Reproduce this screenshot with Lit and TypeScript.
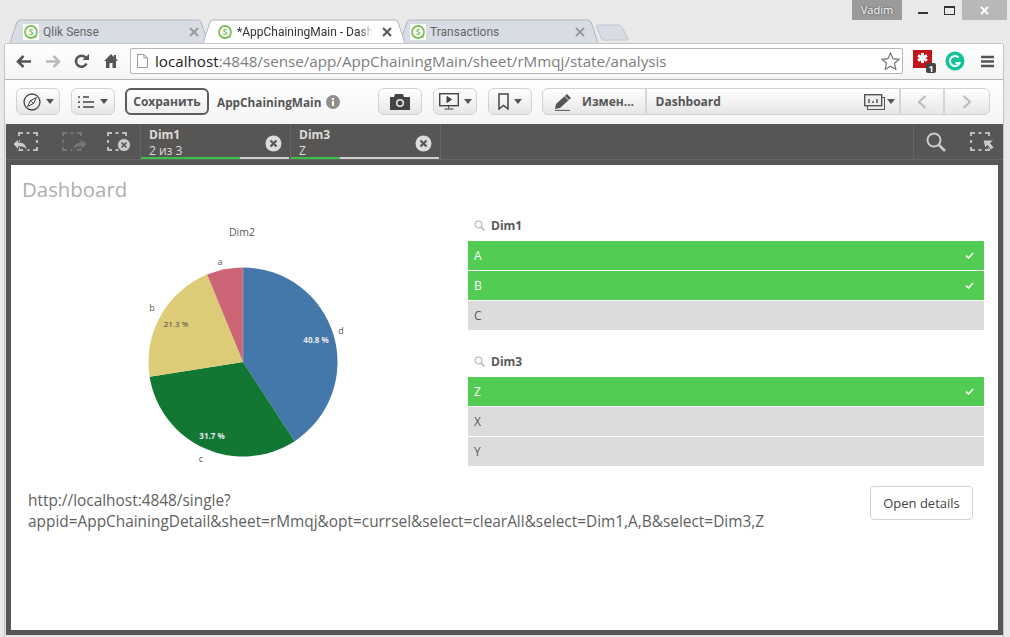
import { LitElement, html, css, svg } from 'lit';
import { customElement } from 'lit/decorators.js';

const slices = [
  { name: 'd', pct: 40.8, color: '#4477aa' },
  { name: 'c', pct: 31.7, color: '#117733' },
  { name: 'b', pct: 21.3, color: '#ddcc77' },
  { name: 'a', pct: 6.2, color: '#cc6677' },
];

const CX = 243;
const CY = 362;
const R = 94.5;

function point(deg: number, r = R) {
  const a = (deg * Math.PI) / 180;
  return [CX + r * Math.sin(a), CY - r * Math.cos(a)];
}

function piePaths() {
  let start = 0;
  return slices.map((s) => {
    const end = start + s.pct * 3.6;
    const [x1, y1] = point(start);
    const [x2, y2] = point(end);
    const large = end - start > 180 ? 1 : 0;
    start = end;
    return svg`<path d="M${CX} ${CY}L${x1} ${y1}A${R} ${R} 0 ${large} 1 ${x2} ${y2}Z" fill=${s.color}></path>`;
  });
}

const caret = html`<svg class="caret" width="8" height="5" viewBox="0 0 8 5"><path d="M0 0h8L4 5z" fill="#555"></path></svg>`;

const favicon = html`<svg class="fav" width="16" height="16" viewBox="0 0 16 16">
  <rect width="16" height="16" fill="#fff"></rect>
  <circle cx="8" cy="8" r="6" fill="none" stroke="#7cc05a" stroke-width="1.8"></circle>
  <path d="M11 12.5l2.5 2v-3.5z" fill="#7cc05a"></path>
  <text x="8" y="11" text-anchor="middle" font-size="8.5" font-weight="700" fill="#7cc05a" font-family="Open Sans, sans-serif">S</text>
</svg>`;

const tabClose = (color: string) => html`<svg class="tab-x" width="10" height="10" viewBox="0 0 10 10"><path d="M1 1l8 8M9 1l-8 8" stroke=${color} stroke-width="2"></path></svg>`;

const clearCircle = html`<svg class="clear" width="17" height="17" viewBox="0 0 17 17">
  <circle cx="8.5" cy="8.5" r="8" fill="#dcdcdc"></circle>
  <path d="M5.5 5.5l6 6M11.5 5.5l-6 6" stroke="#575654" stroke-width="2.2"></path>
</svg>`;

// dashed selection box, x is its left edge inside the 25x19 icon
const dashedBox = (x: number, color: string) =>
  svg`<path transform="translate(${x} 0)" d="M1 4V1h4M15 1h4v3M19 15v3h-4M5 18H1v-3M8.500 1h3M8.500 18h3M1 8v3M19 8v3" fill="none" stroke=${color} stroke-width="2"></path>`;

@customElement('app-root')
export class AppRoot extends LitElement {
  static styles = css`
    :host {
      display: block;
      width: 1010px;
      height: 637px;
      overflow: hidden;
      background: #e9e9e9;
      font-family: 'Open Sans', sans-serif;
      color: #595959;
    }

    /* window title area */
    .strip {
      display: flex;
      justify-content: space-between;
      height: 43px;
    }
    .tabs {
      display: flex;
      padding: 19px 0 0 10px;
    }
    .tab {
      position: relative;
      display: flex;
      align-items: center;
      width: 198px;
      height: 24px;
      margin-right: -5px;
      padding: 2px 9px 0 13px;
      box-sizing: border-box;
      font-family: Roboto, sans-serif;
      font-size: 12px;
      color: #666;
    }
    .tab.active {
      z-index: 2;
      width: 202px;
      color: #333;
      padding: 2px 13px 0 14px;
    }
    .tab:nth-child(3) {
      padding: 2px 13px 0 10px;
    }
    .tab-shape {
      position: absolute;
      inset: 0;
      width: 100%;
      height: 100%;
    }
    .fav,
    .tab-title,
    .tab-x {
      position: relative;
      flex: none;
    }
    .tab-title {
      flex: 1;
      margin-left: 4px;
      overflow: hidden;
      white-space: nowrap;
    }
    .tab.active .tab-title {
      margin-right: 9px;
      -webkit-mask-image: linear-gradient(90deg, #000 90%, transparent);
      mask-image: linear-gradient(90deg, #000 90%, transparent);
    }
    .new-tab {
      margin: 5px 0 0 3px;
    }
    .win {
      display: flex;
      align-items: flex-start;
      padding-right: 3px;
    }
    .vadim {
      width: 50px;
      height: 20px;
      margin-right: 8px;
      background: #9b9b9b;
      color: #fff;
      font-size: 11px;
      line-height: 20px;
      text-align: center;
      text-shadow: 0 0 2px #333;
    }
    .win-btn {
      display: flex;
      align-items: center;
      justify-content: center;
      width: 26px;
      height: 20px;
    }
    .win-close {
      width: 45px;
      background: #b8b8b8;
    }

    /* browser frame */
    .browser {
      height: 594px;
      margin: 0 6px 0 4px;
      padding: 0 0 2px 1px;
      box-sizing: border-box;
      border: 1px solid #c4c4c4;
      border-bottom-width: 0;
      border-radius: 3px 3px 0 0;
      background: #e2e2e2;
      display: flex;
      flex-direction: column;
    }
    .nav {
      display: flex;
      align-items: center;
      height: 36px;
      flex: none;
      margin-left: -1px;
      padding: 0 10px 1px 4px;
      border-bottom: 1px solid #b4b4b4;
      background: linear-gradient(#fff, #f4f4f4);
      box-sizing: border-box;
    }
    .nav-icon {
      display: flex;
      justify-content: center;
      width: 29px;
      flex: none;
    }
    .address {
      display: flex;
      align-items: center;
      width: 773px;
      height: 26px;
      margin-left: 5px;
      padding-left: 6px;
      box-sizing: border-box;
      flex: none;
      border: 1px solid #b5b5b5;
      border-radius: 2px;
      background: #fff;
      font-size: 15.2px;
      color: #7d7d7d;
      white-space: nowrap;
    }
    .address b {
      font-weight: 400;
      color: #222;
    }
    .address .url {
      flex: 1;
      margin-left: 7px;
    }
    .address .star {
      margin-right: 2px;
    }
    .ext {
      display: flex;
      align-items: center;
      margin-left: 10px;
      gap: 9px;
    }
    .menu-icon {
      margin-left: 6px;
    }

    /* qlik toolbar */
    .toolbar {
      display: flex;
      align-items: center;
      flex: none;
      height: 44px;
      margin-left: -1px;
      padding: 0 0 1px 11px;
      background: linear-gradient(#fff, #f5f5f5);
      box-sizing: border-box;
    }
    .btn {
      display: flex;
      align-items: center;
      justify-content: center;
      gap: 5px;
      width: 44px;
      height: 27px;
      box-sizing: border-box;
      flex: none;
      border: 1px solid #d2d2d2;
      border-radius: 6px;
      background: linear-gradient(#fff, #e6e6e6);
    }
    .save {
      width: 84px;
      margin: 0 8px 0 10px;
      border: 2px solid #5c5c5c;
      background: linear-gradient(#fff, #efefef);
      font-size: 12px;
      font-weight: 700;
      color: #555;
    }
    .app-name {
      font-size: 11.8px;
      font-weight: 700;
      color: #555;
      width: 109px;
      flex: none;
      white-space: nowrap;
    }
    .info {
      flex: none;
    }
    .ml-11 {
      margin-left: 11px;
    }
    .ml-38 {
      margin-left: 38px;
    }
    .group {
      display: flex;
      width: 448px;
      height: 27px;
      margin-left: 10px;
      box-sizing: border-box;
      flex: none;
      border: 1px solid #d2d2d2;
      border-radius: 6px;
      background: linear-gradient(#fff, #e6e6e6);
      font-size: 12px;
      font-weight: 700;
      color: #555;
    }
    .group > div {
      display: flex;
      align-items: center;
      box-sizing: border-box;
      border-right: 2px solid #d6d6d6;
    }
    .group > div:last-child {
      border-right: 0;
    }
    .g-edit {
      width: 104px;
      padding-left: 11px;
      gap: 10px;
    }
    .g-sheet {
      width: 256px;
      padding: 0 4px 0 9px;
      justify-content: space-between;
    }
    .g-sheet span {
      display: flex;
      align-items: center;
      gap: 2px;
    }
    .g-nav {
      width: 44px;
      justify-content: center;
    }

    /* dark frame */
    .frame {
      display: flex;
      flex-direction: column;
      flex: 1;
      min-height: 0;
      width: 997px;
      background: #575654;
      box-sizing: border-box;
      padding-bottom: 5px;
    }
    .selbar {
      display: flex;
      flex: none;
      height: 36px;
      margin-bottom: 5px;
      box-sizing: border-box;
      border-bottom: 1px solid #666;
      color: #dcdcdc;
    }
    .sel-tools {
      display: flex;
      align-items: center;
      width: 135px;
      padding-left: 7px;
      box-sizing: border-box;
      flex: none;
      border-right: 1px solid #666;
    }
    .t2 {
      margin-left: 24px;
    }
    .t3 {
      margin-left: 20px;
    }
    .sel-item {
      position: relative;
      width: 150px;
      flex: none;
      box-sizing: border-box;
      padding: 3px 0 0 8px;
      border-right: 1px solid #666;
      font-size: 12px;
      line-height: 16px;
    }
    .sel-item b {
      display: block;
      font-weight: 700;
    }
    .sel-item .clear {
      position: absolute;
      right: 8px;
      top: 11px;
    }
    .sel-track {
      position: absolute;
      left: 0;
      right: 1px;
      bottom: 0;
      height: 2px;
      background: #d0d0d0;
    }
    .sel-fill {
      height: 100%;
      background: #39c24a;
    }
    .sel-right {
      display: flex;
      align-items: center;
      margin-left: auto;
      width: 90px;
      padding-left: 12px;
      gap: 24px;
      box-sizing: border-box;
      border-left: 1px solid #666;
    }

    /* sheet */
    .sheet {
      flex: 1;
      min-height: 0;
      margin: 0 5px;
      background: #fff;
    }
    .sheet h1 {
      height: 51px;
      margin: 0;
      padding: 11px 0 0 11px;
      box-sizing: border-box;
      font-size: 20.4px;
      font-weight: 400;
      line-height: 27px;
      color: #b0aeac;
    }
    .cols {
      display: grid;
      grid-template-columns: 457px 516px;
      height: 270px;
    }
    .cols svg text {
      font-family: 'Open Sans', sans-serif;
    }
    .filter + .filter {
      margin-top: 22px;
    }
    .filter-head {
      display: flex;
      align-items: center;
      gap: 6px;
      height: 25px;
      padding: 0 0 7px 6px;
      box-sizing: border-box;
      font-size: 12px;
      font-weight: 700;
      color: #595959;
    }
    .row {
      display: flex;
      align-items: center;
      justify-content: space-between;
      height: 29px;
      padding: 0 10px 0 6px;
      box-sizing: border-box;
      margin-bottom: 1px;
      background: #dcdcdc;
      font-size: 12px;
      color: #595959;
    }
    .row.sel {
      background: #52cc52;
      color: #fff;
    }
    .row:last-child {
      margin-bottom: 0;
    }
    .footer {
      display: flex;
      justify-content: space-between;
      align-items: flex-start;
      padding: 0 25px 0 17px;
    }
    .link {
      padding-top: 4px;
      font-size: 15.4px;
      line-height: 21px;
      color: #5f5f5f;
    }
    .open {
      width: 103px;
      height: 34px;
      box-sizing: border-box;
      flex: none;
      border: 1px solid #d2d2d2;
      border-radius: 4px;
      background: #fff;
      font-family: inherit;
      font-size: 13px;
      color: #444;
      padding: 0;
    }
  `;

  private renderTab(title: string, active: boolean) {
    const fill = active ? '#fff' : '#d8dde5';
    const w = active ? 202 : 198;
    return html`<div class="tab ${active ? 'active' : ''}">
      <svg class="tab-shape" viewBox="0 0 ${w} 24" preserveAspectRatio="none">
        <path d="M0 24L7 3Q8 1 11 1H${w - 11}Q${w - 8} 1 ${w - 7} 3L${w} 24" fill=${fill} stroke="#b2b5ba"></path>
      </svg>
      ${favicon}
      <span class="tab-title">${title}</span>
      ${tabClose(active ? '#555' : '#9a9a9a')}
    </div>`;
  }

  private renderRow(label: string, sel: boolean) {
    return html`<div class="row ${sel ? 'sel' : ''}">
      <span>${label}</span>
      ${sel
        ? html`<svg width="9" height="7" viewBox="0 0 9 7"><path d="M1 3.5l2.5 2.5L8 1" fill="none" stroke="#fff" stroke-width="1.6"></path></svg>`
        : ''}
    </div>`;
  }

  private renderFilter(name: string, rows: [string, boolean][]) {
    return html`<div class="filter">
      <div class="filter-head">
        <svg width="11" height="11" viewBox="0 0 11 11"><circle cx="4.5" cy="4.5" r="3.5" fill="none" stroke="#aaa"></circle><path d="M7 7l3.5 3.5" stroke="#aaa" stroke-width="1.2"></path></svg>
        ${name}
      </div>
      ${rows.map(([label, sel]) => this.renderRow(label, sel))}
    </div>`;
  }

  private renderSelection(name: string, value: string, fill: number) {
    return html`<div class="sel-item">
      <b>${name}</b>${value}
      ${clearCircle}
      <div class="sel-track"><div class="sel-fill" style="width:${fill}%"></div></div>
    </div>`;
  }

  render() {
    return html`
      <div class="strip">
        <div class="tabs">
          ${this.renderTab('Qlik Sense', false)}
          ${this.renderTab('*AppChainingMain - Dash', true)}
          ${this.renderTab('Transactions', false)}
          <svg class="new-tab" width="33" height="17" viewBox="0 0 33 17"><path d="M1 1H23Q25 1 26 3L32 15Q32 16 30 16H8Q6 16 5 14L1 3Q0 1 1 1Z" fill="#d8dde5" stroke="#c2c5ca"></path></svg>
        </div>
        <div class="win">
          <div class="vadim">Vadim</div>
          <div class="win-btn"><svg width="10" height="10" viewBox="0 0 10 10"><rect y="7" width="10" height="2" fill="#333"></rect></svg></div>
          <div class="win-btn"><svg width="11" height="9" viewBox="0 0 11 9"><rect x=".5" y=".5" width="10" height="8" fill="none" stroke="#333"></rect><rect width="11" height="2" fill="#333"></rect></svg></div>
          <div class="win-btn win-close"><svg width="9" height="9" viewBox="0 0 9 9"><path d="M1 1l7 7M8 1L1 8" stroke="#fff" stroke-width="1.8"></path></svg></div>
        </div>
      </div>

      <div class="browser">
        <div class="nav">
          <div class="nav-icon"><svg width="16" height="13" viewBox="0 0 16 13"><path d="M15 6.5H3M7.5 1L2 6.5 7.5 12" fill="none" stroke="#555" stroke-width="2.6"></path></svg></div>
          <div class="nav-icon"><svg width="16" height="13" viewBox="0 0 16 13"><path d="M1 6.5h12M8.5 1L14 6.5 8.5 12" fill="none" stroke="#bbb" stroke-width="2.6"></path></svg></div>
          <div class="nav-icon"><svg width="15" height="15" viewBox="0 0 15 15"><path d="M12.5 9.5A5.5 5.5 0 1 1 11.5 3.5" fill="none" stroke="#555" stroke-width="2.6"></path><path d="M8.5 6H15V0z" fill="#555"></path></svg></div>
          <div class="nav-icon"><svg width="14" height="14" viewBox="0 0 14 14"><path d="M7 0L0 7h2v7h3.500V9h3v5H12V7h2l-2-2V1h-2v2z" fill="#555"></path></svg></div>
          <div class="address">
            <svg width="11" height="14" viewBox="0 0 11 14"><path d="M.5.500H7L10.500 4v9.500H.5zM7 .5V4h3.500" fill="#fff" stroke="#999"></path></svg>
            <span class="url"><b>localhost</b>:4848/sense/app/AppChainingMain/sheet/rMmqj/state/analysis</span>
            <svg class="star" width="19" height="18" viewBox="0 0 19 18"><path d="M9.500 1l2.500 5.700 6 .6-4.500 4 1.300 6-5.300-3.100-5.300 3.100 1.300-6-4.500-4 6-.6z" fill="#fff" stroke="#777" stroke-width="1.200"></path></svg>
          </div>
          <div class="ext">
            <svg width="23" height="24" viewBox="0 0 23 24">
              <rect y="1" width="19" height="18" fill="#c0151c"></rect>
              <path d="M9.500 4v10M5 6.500l9 5M14 6.500l-9 5" stroke="#fff" stroke-width="3"></path>
              <rect x="13" y="14" width="10" height="10" rx="2" fill="#444"></rect>
              <text x="18" y="22.500" text-anchor="middle" font-size="9" font-weight="700" fill="#fff" font-family="Open Sans, sans-serif">1</text>
            </svg>
            <svg width="20" height="20" viewBox="0 0 20 20"><circle cx="10" cy="10" r="9.500" fill="#15c39a"></circle><path d="M13.500 6.500A5 5 0 1 0 14.500 12H10.500" fill="none" stroke="#fff" stroke-width="2"></path></svg>
            <svg class="menu-icon" width="15" height="13" viewBox="0 0 15 13"><path d="M1 2h13M1 6.500h13M1 11h13" stroke="#555" stroke-width="2.400"></path></svg>
          </div>
        </div>

        <div class="toolbar">
          <div class="btn">
            <svg width="18" height="18" viewBox="0 0 18 18"><circle cx="9" cy="9" r="8" fill="none" stroke="#444" stroke-width="1.300"></circle><path d="M13.500 4.500L10.500 10.500 7.500 7.500zM4.500 13.500L7.500 7.500 10.500 10.500z" fill="none" stroke="#444"></path></svg>
            ${caret}
          </div>
          <div class="btn ml-11">
            <svg width="17" height="12" viewBox="0 0 17 12"><path d="M0 1h2M5 1h6M0 6h2M5 6h11M0 11h2M5 11h11" stroke="#444" stroke-width="1.500"></path></svg>
            ${caret}
          </div>
          <div class="btn save">Сохранить</div>
          <div class="app-name">AppChainingMain</div>
          <svg class="info" width="14" height="14" viewBox="0 0 14 14"><circle cx="7" cy="7" r="7" fill="#8f8f8f"></circle><path d="M6 6h2v5H6zM6 3h2v2H6z" fill="#fff"></path></svg>
          <div class="btn ml-38">
            <svg width="20" height="16" viewBox="0 0 20 16"><path d="M0 3h4l1-3h8l1 3h6v13H0z" fill="#444"></path><circle cx="10" cy="9" r="4" fill="#eee"></circle><circle cx="10" cy="9" r="2.500" fill="#444"></circle></svg>
          </div>
          <div class="btn ml-11">
            <svg width="20" height="17" viewBox="0 0 20 17"><rect x=".7" y=".7" width="18.600" height="12" fill="none" stroke="#444" stroke-width="1.400"></rect><path d="M8 3.500l4.500 3L8 9.500zM9.500 13v2.500M5.500 16h9" fill="#444" stroke="#444"></path></svg>
            ${caret}
          </div>
          <div class="btn ml-11">
            <svg width="11" height="17" viewBox="0 0 11 17"><path d="M1 1h9v15L5.500 12.500 1 16z" fill="none" stroke="#444" stroke-width="1.500"></path></svg>
            ${caret}
          </div>
          <div class="group">
            <div class="g-edit">
              <svg width="18" height="18" viewBox="0 0 18 18"><path d="M13 1l4 4L6 15l-5 1 1-5z" fill="#555"></path><path d="M10.800 3.200l4 4" stroke="#eee"></path><path d="M1 17.400h15" stroke="#555"></path></svg>
              <span>Измен...</span>
            </div>
            <div class="g-sheet">
              Dashboard
              <span>
                <svg width="21" height="16" viewBox="0 0 21 16"><rect x="3.500" y="3.500" width="17" height="12" fill="none" stroke="#555"></rect><rect x=".7" y=".7" width="17" height="11" fill="#eee" stroke="#555" stroke-width="1.400"></rect><path d="M5 5v4M9 7v2M13 5v4" stroke="#555" stroke-width="1.500"></path></svg>
                ${caret}
              </span>
            </div>
            <div class="g-nav"><svg width="10" height="14" viewBox="0 0 10 14"><path d="M8.500 1L2 7l6.500 6" fill="none" stroke="#bbb" stroke-width="2"></path></svg></div>
            <div class="g-nav"><svg width="10" height="14" viewBox="0 0 10 14"><path d="M1.500 1L8 7l-6.500 6" fill="none" stroke="#bbb" stroke-width="2"></path></svg></div>
          </div>
        </div>

        <div class="frame">
          <div class="selbar">
            <div class="sel-tools">
              <svg width="25" height="19" viewBox="0 0 25 19">${dashedBox(5, '#bdbdbd')}<path d="M0 12l5.500-5v3.200c4 0 7.500.8 9 8.300-2-3-5-3.800-9-3.800V18z" fill="#ccc" stroke="#575654"></path></svg>
              <svg class="t2" width="25" height="19" viewBox="0 0 25 19">${dashedBox(0, '#767674')}<path d="M25 12l-5.500-5v3.200c-4 0-7.500.8-9 8.300 2-3 5-3.800 9-3.800V18z" fill="#767674" stroke="#575654"></path></svg>
              <svg class="t3" width="25" height="19" viewBox="0 0 25 19">${dashedBox(0, '#bdbdbd')}<circle cx="17" cy="13" r="6.500" fill="#ccc" stroke="#575654"></circle><path d="M14.500 10.500l5 5M19.500 10.500l-5 5" stroke="#575654" stroke-width="1.600"></path></svg>
            </div>
            ${this.renderSelection('Dim1', '2 из 3', 66.7)}
            ${this.renderSelection('Dim3', 'Z', 33.3)}
            <div class="sel-right">
              <svg width="20" height="20" viewBox="0 0 20 20"><circle cx="8" cy="8" r="6.500" fill="none" stroke="#ccc" stroke-width="2"></circle><path d="M12.500 12.500L19 19" stroke="#ccc" stroke-width="2.500"></path></svg>
              <svg width="25" height="19" viewBox="0 0 25 19">${dashedBox(0, '#bdbdbd')}<path d="M13 8h11l-3.500 3 3.500 4.500-3 2.500-3.500-4.500L15 16z" fill="#ccc" stroke="#575654"></path></svg>
            </div>
          </div>

          <div class="sheet">
            <h1>Dashboard</h1>
            <div class="cols">
              <svg width="457" height="270" viewBox="11 216 457 270">
                <text x="242" y="236" text-anchor="middle" font-size="10.500" fill="#595959">Dim2</text>
                ${piePaths()}
                <path d="M243 362V267.500" stroke="#fff" stroke-opacity=".4" stroke-width=".6"></path>
                <text x="316" y="343" text-anchor="middle" font-size="8" font-weight="700" fill="#e8e8e8">40.8 %</text>
                <text x="212" y="439" text-anchor="middle" font-size="8" font-weight="700" fill="#e8e8e8">31.7 %</text>
                <text x="176" y="327" text-anchor="middle" font-size="8" fill="#444">21.3 %</text>
                <text x="341" y="334" text-anchor="middle" font-size="9" fill="#595959">d</text>
                <text x="201" y="462" text-anchor="middle" font-size="9" fill="#595959">c</text>
                <text x="152" y="311" text-anchor="middle" font-size="9" fill="#595959">b</text>
                <text x="220" y="265" text-anchor="middle" font-size="9" fill="#595959">a</text>
              </svg>
              <div>
                ${this.renderFilter('Dim1', [['A', true], ['B', true], ['C', false]])}
                ${this.renderFilter('Dim3', [['Z', true], ['X', false], ['Y', false]])}
              </div>
            </div>
            <div class="footer">
              <div class="link">http://localhost:4848/single?<br />appid=AppChainingDetail&amp;sheet=rMmqj&amp;opt=currsel&amp;select=clearAll&amp;select=Dim1,A,B&amp;select=Dim3,Z</div>
              <button class="open">Open details</button>
            </div>
          </div>
        </div>
      </div>
    `;
  }
}
